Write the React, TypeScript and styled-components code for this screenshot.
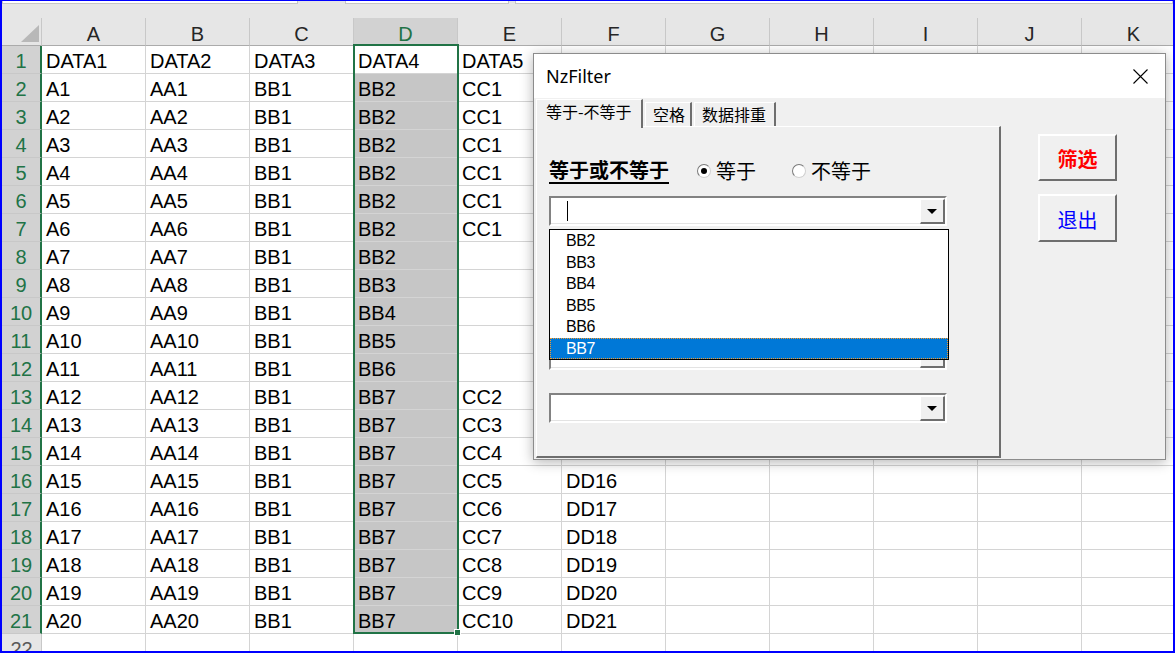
import React from 'react';
import styled, { createGlobalStyle, css } from 'styled-components';

const GlobalStyle = createGlobalStyle`
  html, body {
    margin: 0;
    padding: 0;
    overflow: hidden;
    background: #fff;
  }
`;

const COLS = ['A', 'B', 'C', 'D', 'E', 'F', 'G', 'H', 'I', 'J', 'K'];
const SEL_COL = 3;
const SEL_LAST_ROW = 21;

// cell values for row r (1-based), 11 columns
const makeRow = (r: number): string[] => {
  const out = new Array(COLS.length).fill('');
  if (r === 1) {
    ['DATA1', 'DATA2', 'DATA3', 'DATA4', 'DATA5'].forEach((v, i) => (out[i] = v));
    return out;
  }
  if (r > 21) return out;
  out[0] = `A${r - 1}`;
  out[1] = `AA${r - 1}`;
  out[2] = 'BB1';
  out[3] = r <= 8 ? 'BB2' : r <= 12 ? `BB${r - 6}` : 'BB7';
  out[4] = r <= 7 ? 'CC1' : r <= 12 ? '' : `CC${r - 11}`;
  out[5] = `DD${r}`;
  return out;
};

const rows = Array.from({ length: 22 }, (_, i) => makeRow(i + 1));
const listItems = ['BB2', 'BB3', 'BB4', 'BB5', 'BB6', 'BB7'];

const Frame = styled.div`
  position: relative;
  width: 1175px;
  height: 653px;
  box-sizing: border-box;
  border: 2px solid #0000ff;
  border-top-width: 1px;
  overflow: hidden;
  display: flex;
  flex-direction: column;
  background: #fff;
  font-family: 'Liberation Sans', Arial, sans-serif;
`;

const TopStrip = styled.div`
  flex: none;
  height: 17px;
  background: #e6e6e6;
  display: flex;
  align-items: flex-start;
`;

const BarBox = styled.div<{ $w: number; $ml: number }>`
  width: ${p => p.$w}px;
  margin-left: ${p => p.$ml}px;
  height: 2px;
  background: #fff;
  border: 1px solid #c6c6c6;
  border-top: none;
`;

const Sheet = styled.div`
  position: relative;
  flex: 1;
  min-height: 0;
  overflow: hidden;
  display: grid;
  grid-template-columns: 40px repeat(11, 104px);
  grid-auto-rows: 28px;
`;

const Corner = styled.div`
  box-sizing: border-box;
  background: #e6e6e6;
  border-right: 1px solid #c8c8c8;
  border-bottom: 1px solid #ababab;
  display: flex;
  justify-content: flex-end;
  align-items: flex-end;
  padding: 0 2px 3px 0;
`;

const CornerTri = styled.div`
  width: 0;
  height: 0;
  border-left: 18px solid transparent;
  border-bottom: 17px solid #b8b8b8;
`;

const ColHead = styled.div<{ $sel?: boolean }>`
  box-sizing: border-box;
  background: ${p => (p.$sel ? '#d2d2d2' : '#e6e6e6')};
  color: ${p => (p.$sel ? '#217346' : '#262626')};
  border-right: 1px solid #c8c8c8;
  border-bottom: ${p => (p.$sel ? '2px solid #217346' : '1px solid #ababab')};
  text-align: center;
  font-size: 20px;
  line-height: 22px;
  padding-top: 5px;
`;

const RowHead = styled.div<{ $sel?: boolean }>`
  box-sizing: border-box;
  background: ${p => (p.$sel ? '#d2d2d2' : '#e6e6e6')};
  color: ${p => (p.$sel ? '#217346' : '#595959')};
  border-right: ${p => (p.$sel ? '2px solid #217346' : '1px solid #c8c8c8')};
  border-bottom: 1px solid #c8c8c8;
  text-align: center;
  font-size: 20px;
  line-height: 30px;
  overflow: hidden;
`;

const Cell = styled.div<{ $shade?: boolean }>`
  box-sizing: border-box;
  background: ${p => (p.$shade ? '#c6c6c6' : '#fff')};
  border-right: 1px solid #d4d4d4;
  border-bottom: 1px solid #d4d4d4;
  padding-left: 4px;
  font-size: 20px;
  line-height: 30px;
  color: #000;
  white-space: nowrap;
  overflow: hidden;
`;

const SelBox = styled.div`
  position: absolute;
  left: 351px;
  top: 26px;
  width: 106px;
  height: 590px;
  box-sizing: border-box;
  border: 2px solid #217346;
  pointer-events: none;
`;

const FillHandle = styled.div`
  position: absolute;
  right: -4px;
  bottom: -4px;
  width: 5px;
  height: 5px;
  background: #217346;
  border: 1px solid #fff;
`;

/* ---------- dialog ---------- */

const Dialog = styled.div`
  position: absolute;
  left: 531px;
  top: 52px;
  width: 633px;
  height: 407px;
  box-sizing: border-box;
  border: 1px solid #8c8c8c;
  box-shadow: 0 2px 12px rgba(0, 0, 0, 0.3);
  background: #f0f0f0;
  display: flex;
  flex-direction: column;
  font-family: 'Noto Sans CJK SC', 'Noto Sans', sans-serif;
  color: #000;
`;

const TitleBar = styled.div`
  flex: none;
  height: 44px;
  background: #fff;
  display: flex;
  align-items: center;
  padding-left: 12px;
`;

const Title = styled.span`
  font-family: 'Noto Sans', 'Noto Sans CJK SC', sans-serif;
  font-size: 18px;
`;

const CloseBtn = styled.div`
  margin-left: auto;
  width: 50px;
  height: 44px;
  display: flex;
  align-items: center;
  justify-content: center;
`;

const Body = styled.div`
  flex: 1;
  min-height: 0;
  display: flex;
`;

const LeftPane = styled.div`
  width: 467px;
  box-sizing: border-box;
  padding: 0 0 1px 2px;
  display: flex;
  flex-direction: column;
`;

const TabStrip = styled.div`
  flex: none;
  height: 28px;
  display: flex;
  align-items: flex-end;
  gap: 2px;
  position: relative;
  z-index: 1;
`;

const Tab = styled.div<{ $active?: boolean; $w: number }>`
  box-sizing: border-box;
  width: ${p => p.$w}px;
  background: #f0f0f0;
  border-left: 1px solid #fff;
  border-top: 1px solid #fff;
  border-right: 2px solid #6e6e6e;
  font-size: 16px;
  line-height: 22px;
  white-space: nowrap;
  ${p =>
    p.$active
      ? css`
          height: 29px;
          margin-bottom: -2px;
          padding-left: 9px;
        `
      : css`
          height: 24px;
          padding-left: 7px;
        `}
`;

const Panel = styled.div`
  flex: 1;
  position: relative;
  box-sizing: border-box;
  border-top: 1px solid #fff;
  border-left: 1px solid #fff;
  border-right: 2px solid #6e6e6e;
  border-bottom: 2px solid #6e6e6e;
  padding: 30px 0 0 12px;
  display: flex;
  flex-direction: column;
`;

const LabelRow = styled.div`
  height: 26px;
  display: flex;
  align-items: center;
`;

const GroupLabel = styled.span`
  font-size: 20px;
  font-weight: 700;
  line-height: 26px;
  text-decoration: underline;
  text-decoration-thickness: 1.5px;
  text-underline-offset: 4px;
`;

const RadioItem = styled.label<{ $ml: number }>`
  display: flex;
  align-items: center;
  gap: 5px;
  margin-left: ${p => p.$ml}px;
  font-size: 20px;
  line-height: 26px;
  padding-top: 2px;
`;

const RadioCircle = styled.span<{ $on?: boolean }>`
  width: 14px;
  height: 14px;
  box-sizing: border-box;
  border-radius: 50%;
  border: 1px solid #7a7a7a;
  border-right-color: #d0d0d0;
  border-bottom-color: #d0d0d0;
  background: #fff;
  display: flex;
  align-items: center;
  justify-content: center;
  ${p =>
    p.$on &&
    css`
      &::after {
        content: '';
        width: 6px;
        height: 6px;
        border-radius: 50%;
        background: #000;
      }
    `}
`;

const ComboWrap = styled.div<{ $mt: number }>`
  position: relative;
  width: 398px;
  margin-top: ${p => p.$mt}px;
`;

const Combo = styled.div`
  height: 30px;
  box-sizing: border-box;
  background: #fff;
  border-style: solid;
  border-width: 2px;
  border-color: #828282 #ffffff #ffffff #828282;
  box-shadow: inset -1px -1px 0 #e3e3e3;
  display: flex;
  align-items: flex-start;
`;

const Caret = styled.span`
  width: 1px;
  height: 20px;
  margin: 3px 0 0 16px;
  background: #000;
`;

const DropBtn = styled.div`
  margin: 1px 0 0 auto;
  width: 25px;
  height: 25px;
  box-sizing: border-box;
  background: #f0f0f0;
  border-style: solid;
  border-width: 1px 2px 2px 1px;
  border-color: #fff #6e6e6e #6e6e6e #fff;
  display: flex;
  align-items: center;
  justify-content: center;
`;

const DropArrow = styled.span`
  width: 0;
  height: 0;
  border-left: 5px solid transparent;
  border-right: 5px solid transparent;
  border-top: 5px solid #000;
`;

const DropList = styled.div`
  position: absolute;
  top: calc(100% + 3px);
  left: 0;
  width: 400px;
  box-sizing: border-box;
  border: 1px solid #000;
  background: #fff;
  z-index: 2;
  font-family: 'Liberation Sans', Arial, sans-serif;
  font-size: 16px;
  letter-spacing: -0.4px;
`;

const ListItem = styled.div<{ $sel?: boolean }>`
  height: 21.5px;
  box-sizing: border-box;
  line-height: 21.5px;
  padding-left: 16px;
  ${p =>
    p.$sel &&
    css`
      background: #0078d7;
      color: #fff;
      border: 1px dotted #f39c32;
      line-height: 19.5px;
      padding-left: 15px;
    `}
`;

const RightPane = styled.div`
  display: flex;
  flex-direction: column;
  gap: 13px;
  padding: 36px 0 0 37px;
`;

const CmdButton = styled.div<{ $tone: 'red' | 'blue'; $h: number }>`
  width: 79px;
  height: ${p => p.$h}px;
  box-sizing: border-box;
  background: #f0f0f0;
  border-style: solid;
  border-width: 2px;
  border-color: #fff #6e6e6e #6e6e6e #fff;
  display: flex;
  align-items: center;
  justify-content: center;
  padding-top: 2px;
  font-size: 20px;
  color: ${p => (p.$tone === 'red' ? '#ff0000' : '#0000ff')};
  font-weight: ${p => (p.$tone === 'red' ? 700 : 400)};
`;

const ComboBox: React.FC<{ mt: number; caret?: boolean; children?: React.ReactNode }> = ({ mt, caret, children }) => (
  <ComboWrap $mt={mt}>
    <Combo>
      {caret && <Caret />}
      <DropBtn>
        <DropArrow />
      </DropBtn>
    </Combo>
    {children}
  </ComboWrap>
);

const App: React.FC = () => (
  <>
    <GlobalStyle />
    <Frame>
      <TopStrip>
        <BarBox $w={296} $ml={0} />
        <BarBox $w={162} $ml={47} />
        <BarBox $w={660} $ml={6} />
      </TopStrip>

      <Sheet>
        <Corner>
          <CornerTri />
        </Corner>
        {COLS.map((c, i) => (
          <ColHead key={c} $sel={i === SEL_COL}>
            {c}
          </ColHead>
        ))}
        {rows.map((row, ri) => (
          <React.Fragment key={ri}>
            <RowHead $sel={ri + 1 <= SEL_LAST_ROW}>{ri + 1}</RowHead>
            {row.map((v, ci) => (
              <Cell key={ci} $shade={ci === SEL_COL && ri > 0 && ri + 1 <= SEL_LAST_ROW}>
                {v}
              </Cell>
            ))}
          </React.Fragment>
        ))}
        <SelBox>
          <FillHandle />
        </SelBox>
      </Sheet>

      <Dialog>
        <TitleBar>
          <Title>NzFilter</Title>
          <CloseBtn>
            <svg width="15" height="15" viewBox="0 0 15 15">
              <path d="M0.5 0.5 L14.5 14.5 M14.5 0.5 L0.5 14.5" stroke="#000" strokeWidth="1.1" fill="none" />
            </svg>
          </CloseBtn>
        </TitleBar>
        <Body>
          <LeftPane>
            <TabStrip>
              <Tab $active $w={107}>等于-不等于</Tab>
              <Tab $w={47}>空格</Tab>
              <Tab $w={82}>数据排重</Tab>
            </TabStrip>
            <Panel>
              <LabelRow>
                <GroupLabel>等于或不等于</GroupLabel>
                <RadioItem $ml={28}>
                  <RadioCircle $on />
                  等于
                </RadioItem>
                <RadioItem $ml={36}>
                  <RadioCircle />
                  不等于
                </RadioItem>
              </LabelRow>
              <ComboBox mt={13} caret>
                <DropList>
                  {listItems.map(it => (
                    <ListItem key={it} $sel={it === 'BB7'}>
                      {it}
                    </ListItem>
                  ))}
                </DropList>
              </ComboBox>
              <ComboBox mt={114} />
              <ComboBox mt={23} />
            </Panel>
          </LeftPane>
          <RightPane>
            <CmdButton $tone="red" $h={47}>筛选</CmdButton>
            <CmdButton $tone="blue" $h={48}>退出</CmdButton>
          </RightPane>
        </Body>
      </Dialog>
    </Frame>
  </>
);

export default App;
